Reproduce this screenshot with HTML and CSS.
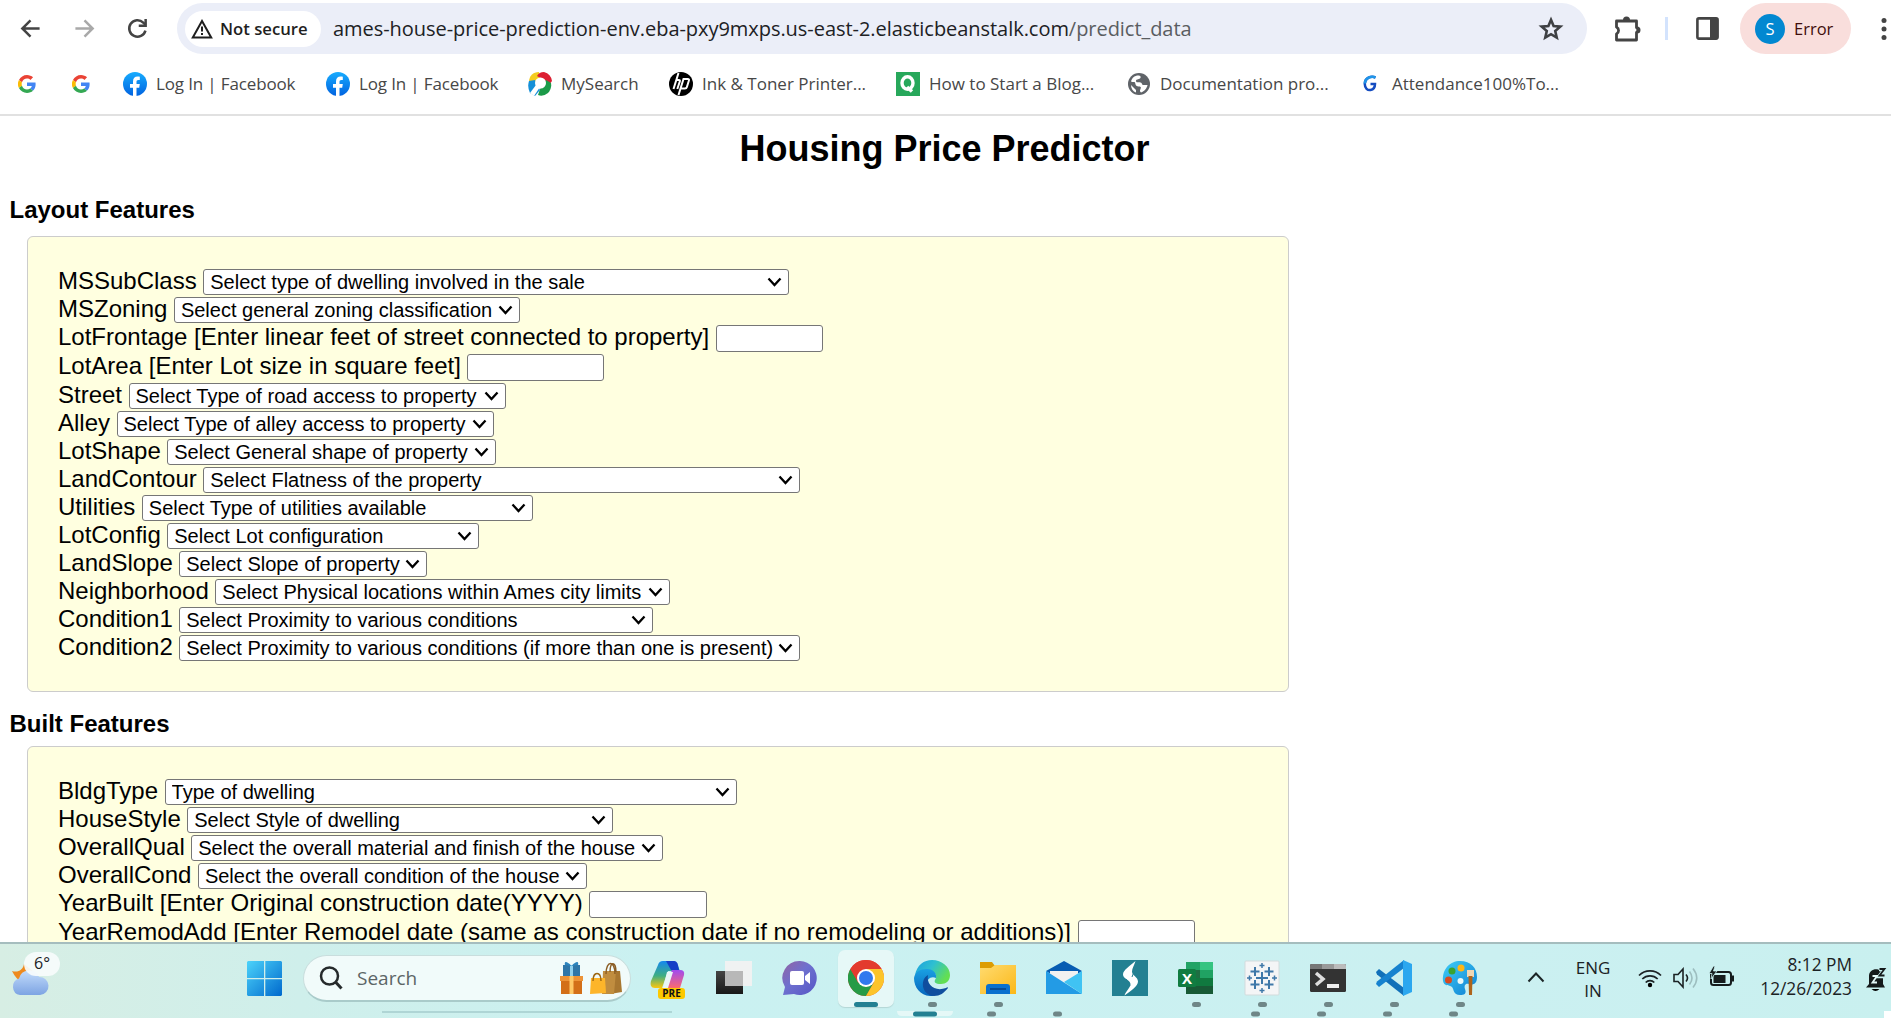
FILE: index.html
```html
<!DOCTYPE html>
<html lang="en">
<head>
<meta charset="utf-8">
<title>Housing Price Predictor</title>
<link rel="stylesheet" href="styles.css">
</head>
<body>
<svg width="0" height="0" class="defs" aria-hidden="true">
  <defs>
    <linearGradient id="fb" x1="0" y1="0" x2="0" y2="1"><stop offset="0" stop-color="#18acfe"/><stop offset="1" stop-color="#0163e0"/></linearGradient>
    <linearGradient id="win" x1="0" y1="0" x2="1" y2="1"><stop offset="0" stop-color="#4cd3fa"/><stop offset="1" stop-color="#0069cd"/></linearGradient>
    <linearGradient id="cloud" x1="0" y1="0" x2="0" y2="1"><stop offset="0" stop-color="#c3dcfb"/><stop offset="1" stop-color="#7da4e3"/></linearGradient>
    <linearGradient id="copA" x1="0" y1="0" x2="0" y2="1"><stop offset="0" stop-color="#1588ee"/><stop offset=".55" stop-color="#3fae82"/><stop offset="1" stop-color="#fdc70c"/></linearGradient>
    <linearGradient id="copB" x1="0" y1="0" x2="0" y2="1"><stop offset="0" stop-color="#a04bf0"/><stop offset="1" stop-color="#fb6a70"/></linearGradient>
    <linearGradient id="chat" x1="0" y1="0" x2="1" y2="1"><stop offset="0" stop-color="#9364a3"/><stop offset=".45" stop-color="#6e70cf"/><stop offset="1" stop-color="#5656c5"/></linearGradient>
    <linearGradient id="edgeA" x1="0" y1="0" x2="1" y2=".5"><stop offset="0" stop-color="#1a9fe0"/><stop offset=".5" stop-color="#2fc0d0"/><stop offset="1" stop-color="#63df52"/></linearGradient>
    <linearGradient id="edgeB" x1="0" y1="0" x2="0" y2="1"><stop offset="0" stop-color="#1aa0e2"/><stop offset="1" stop-color="#0766bd"/></linearGradient>
    <linearGradient id="fold" x1="0" y1="0" x2="1" y2="1"><stop offset="0" stop-color="#ffdb70"/><stop offset="1" stop-color="#fbb818"/></linearGradient>
    <linearGradient id="paint" x1="0" y1="0" x2="1" y2="1"><stop offset="0" stop-color="#3ecdf7"/><stop offset="1" stop-color="#0f7fd2"/></linearGradient>
    <linearGradient id="dark" x1="0" y1="0" x2="0" y2="1"><stop offset="0" stop-color="#454545"/><stop offset="1" stop-color="#181818"/></linearGradient>
  </defs>
  <symbol id="google" viewBox="0 0 48 48"><path fill="#ea4335" d="M24 9.500c3.500 0 6.700 1.200 9.200 3.600l6.900-6.900C35.900 2.400 30.500 0 24 0 14.600 0 6.500 5.400 2.600 13.200l8 6.200C12.400 13.700 17.700 9.500 24 9.500z"/><path fill="#4285f4" d="M47 24.600c0-1.600-.2-3.100-.4-4.600H24v9h12.900c-.6 3-2.300 5.500-4.800 7.200l7.700 6C44.400 38 47 31.800 47 24.600z"/><path fill="#fbbc05" d="M10.500 28.600a14.500 14.500 0 0 1 0-9.200l-8-6.200a24 24 0 0 0 0 21.600z"/><path fill="#34a853" d="M24 48c6.500 0 11.900-2.100 15.900-5.800l-7.700-6c-2.200 1.400-4.900 2.300-8.200 2.300-6.300 0-11.600-4.200-13.500-9.900l-8 6.200C6.500 42.600 14.600 48 24 48z"/></symbol>
  <symbol id="facebook" viewBox="0 0 24 24"><circle cx="12" cy="12" r="12" fill="url(#fb)"/><path fill="#fff" d="M10 24v-8.300H7V12h3v-2.600C10 6.300 11.800 4.600 14.500 4.600c1.300 0 2.300.2 2.300.2V8h-1.400c-1.500 0-1.900.9-1.900 1.800V12h3.300l-.6 3.700h-2.700V24z"/></symbol>
</svg>

<header class="browser">
  <div class="toolbar">
    <svg class="nav-icon" viewBox="0 0 24 24"><path d="M21.500 12H4M12 3.500 3.500 12l8.500 8.500"/></svg>
    <svg class="nav-icon disabled" viewBox="0 0 24 24"><path d="M2.500 12H20M12 3.500l8.500 8.500-8.500 8.500"/></svg>
    <svg class="nav-icon" viewBox="0 0 24 24"><path d="M20.300 14.200A8.600 8.600 0 1 1 18 5.800l2.500 2.500"/><path d="M20.500 2v7.200h-7.200"/></svg>
    <div class="address">
      <div class="security">
        <svg width="22" height="20" viewBox="0 0 22 20"><path d="M11 2 20.200 18.500H1.800z" fill="none" stroke="#1f1f1f" stroke-width="2"/><path d="M11 7.500v5M11 14v2" stroke="#1f1f1f" stroke-width="2"/></svg>
        <span>Not secure</span>
      </div>
      <div class="url">ames-house-price-prediction-env.eba-pxy9mxps.us-east-2.elasticbeanstalk.com<span>/predict_data</span></div>
      <svg class="star" width="26" height="26" viewBox="0 0 24 24"><path d="m12 3.500 2.400 5.800 6.200.5-4.700 4.100 1.400 6.100-5.300-3.200L6.700 20l1.400-6.100-4.700-4.100 6.200-.5z" fill="none" stroke="#3f4144" stroke-width="2.400"/></svg>
    </div>
    <svg class="puzzle" width="28" height="28" viewBox="0 0 28 28"><path d="M3.500 6h20v6.500a3 3 0 0 1 0 5V25h-20v-6a4 4 0 0 0 0-7z" fill="none" stroke="#444" stroke-width="2.800" stroke-linejoin="round"/><path d="M10 5a3.500 3.500 0 0 1 7 0zM24 11.500a3.500 3.500 0 0 1 0 7z" fill="#444"/></svg>
    <i class="divider"></i>
    <svg class="panel" width="23" height="23" viewBox="0 0 23 23"><rect x="1.400" y="1.400" width="20.200" height="20.200" rx="1.500" fill="none" stroke="#444" stroke-width="2.600"/><path d="M14 1h8v21h-8z" fill="#444"/></svg>
    <div class="profile"><b>S</b><span>Error</span></div>
    <svg class="more" width="8" height="24" viewBox="0 0 8 24"><circle cx="4" cy="3.500" r="2.500"/><circle cx="4" cy="12" r="2.500"/><circle cx="4" cy="20.500" r="2.500"/></svg>
  </div>
  <nav class="bookmarks">
    <a><svg width="18" height="18"><use href="#google"/></svg></a>
    <a><svg width="18" height="18"><use href="#google"/></svg></a>
    <a class="fb"><svg width="24" height="24"><use href="#facebook"/></svg><span>Log In | Facebook</span></a>
    <a class="fb"><svg width="24" height="24"><use href="#facebook"/></svg><span>Log In | Facebook</span></a>
    <a><svg width="24" height="24" viewBox="0 0 24 24"><path d="M1 10C1 4 5 0 11 0l1 6-5 8H1z" fill="#f4cc20"/><path d="M9 4q2-4 7-4 7 2 8 9l-3 4-7-6z" fill="#dc1f32"/><path d="M18 8l5 3q1 6-3 10-5 4-10 2l2-6z" fill="#1b9a48"/><path d="M1 9q-2 6 1 12l5 3 5-6-5-10z" fill="#148fd8"/><circle cx="12.500" cy="11" r="5.500" fill="#fff"/><path d="m8 13-6 8 4 3 6-9z" fill="#fff"/></svg><span>MySearch</span></a>
    <a><svg width="24" height="24" viewBox="0 0 24 24"><circle cx="12" cy="12" r="12"/><g fill="none" stroke="#fff" stroke-width="2"><path d="M9.500 1 4.500 17M6.500 8h3.300q1.500 0 1 1.500L8.300 17M17.500 7h-3L9.500 23M17.500 7h1.200q1.700 0 1.200 1.500l-2 6.500q-.4 1.500-2 1.500h-4"/></g></svg><span>Ink &amp; Toner Printer...</span></a>
    <a><svg width="24" height="24" viewBox="0 0 24 24"><path d="M0 0h24v24H0z" fill="#27a85b"/><ellipse cx="11.500" cy="11" rx="5.500" ry="6.300" fill="none" stroke="#fff" stroke-width="3.400"/><path d="m11 15 5 4.500" stroke="#fff" stroke-width="3.500"/></svg><span>How to Start a Blog...</span></a>
    <a><svg width="22" height="22" viewBox="0 0 22 22"><circle cx="11" cy="11" r="11" fill="#5f6368"/><path d="M3 8.500C4 4 8 2 11 2.500c2 .3 2 2 1 3-1.500 1-4 .5-4 2.500s3 1 4.500 1.500c2 .5 1 2.500 3 2.500h4c-.5 3-3 6.500-6.500 7.500-1-1-1.500-1.500-.5-3.500 1-2 0-2.500-2-2.500-3 0-3-3-3.500-4C6.500 8.500 5 9.500 3 8.500zM3 12l5 5v2.500c-3-1-5-4-5-7.500z" fill="#fff"/></svg><span>Documentation pro...</span></a>
    <a><svg width="14" height="17" viewBox="0 0 14 17"><path d="M12.500 2.500C8 .5 2 3 1.800 8.500c-.2 5 3 7 5.700 6.500 3-.5 4.500-3 4.500-6H7.500" fill="none" stroke="#144cc0" stroke-width="2.500"/><path d="M12.500 2.500C8 .5 2 3 1.800 8.500" fill="none" stroke="#1f95e8" stroke-width="2.500"/></svg><span>Attendance100%To...</span></a>
  </nav>
</header>

<main>
  <h1>Housing Price Predictor</h1>
  <h2>Layout Features</h2>
  <section class="pane layout-pane">
    <div class="row"><label>MSSubClass</label><select class="w586"><option>Select type of dwelling involved in the sale</option></select></div>
    <div class="row"><label>MSZoning</label><select class="w346"><option>Select general zoning classification</option></select></div>
    <div class="row number"><label>LotFrontage [Enter linear feet of street connected to property]</label><input class="w107"></div>
    <div class="row number"><label>LotArea [Enter Lot size in square feet]</label><input class="w136"></div>
    <div class="row"><label>Street</label><select class="w377"><option>Select Type of road access to property</option></select></div>
    <div class="row"><label>Alley</label><select class="w377"><option>Select Type of alley access to property</option></select></div>
    <div class="row"><label>LotShape</label><select class="w329"><option>Select General shape of property</option></select></div>
    <div class="row"><label>LandContour</label><select class="w597"><option>Select Flatness of the property</option></select></div>
    <div class="row"><label>Utilities</label><select class="w391"><option>Select Type of utilities available</option></select></div>
    <div class="row"><label>LotConfig</label><select class="w312"><option>Select Lot configuration</option></select></div>
    <div class="row"><label>LandSlope</label><select class="w248"><option>Select Slope of property</option></select></div>
    <div class="row"><label>Neighborhood</label><select class="w455"><option>Select Physical locations within Ames city limits</option></select></div>
    <div class="row"><label>Condition1</label><select class="w474"><option>Select Proximity to various conditions</option></select></div>
    <div class="row"><label>Condition2</label><select class="w621"><option>Select Proximity to various conditions (if more than one is present)</option></select></div>
  </section>
  <h2 class="built">Built Features</h2>
  <section class="pane">
    <div class="row"><label>BldgType</label><select class="w572"><option>Type of dwelling</option></select></div>
    <div class="row"><label>HouseStyle</label><select class="w426"><option>Select Style of dwelling</option></select></div>
    <div class="row"><label>OverallQual</label><select class="w472"><option>Select the overall material and finish of the house</option></select></div>
    <div class="row"><label>OverallCond</label><select class="w389"><option>Select the overall condition of the house</option></select></div>
    <div class="row number"><label>YearBuilt [Enter Original construction date(YYYY)</label><input class="w118"></div>
    <div class="row number"><label>YearRemodAdd [Enter Remodel date (same as construction date if no remodeling or additions)]</label><input class="w117"></div>
  </section>
</main>

<footer class="taskbar">
  <div class="weather">
    <svg width="38" height="36" viewBox="0 0 38 36"><path d="M1 11c6 2 11-1 12-7l10 8-12 10c-4-2-7-5-10-11z" fill="#ee8a1e"/><path d="M9 35a8.500 8.500 0 0 1-1-16.500A10.500 10.500 0 0 1 28 17a9 9 0 0 1 1 18z" fill="url(#cloud)"/></svg>
    <span>6°</span>
  </div>
  <svg class="start" width="35" height="35" viewBox="0 0 35 35"><path d="M1 0h16v17H0V1zM18.300 0H34l1 1v16H18.300zM0 18.300h17V35H1l-1-1zM18.300 18.300H35V34l-1 1H18.300z" fill="url(#win)"/></svg>
  <div class="search">
    <svg width="24" height="24" viewBox="0 0 24 24"><circle cx="10.500" cy="10" r="8.500" fill="none" stroke="#252a2b" stroke-width="2.500"/><path d="m16.500 16 6 6.500" stroke="#252a2b" stroke-width="3"/></svg>
    <span>Search</span>
    <svg class="gifts" width="62" height="34" viewBox="0 0 62 34"><path d="M3 4h17v11H3z" fill="#2f76a8"/><path d="M10 4h3v11h-3z" fill="#8fd0ee"/><path d="M11.500 5C6-1 4 1 5 4zM11.500 5C17-1 19 1 18 4z" fill="#2d84bd"/><path d="M1 18h21v15H1z" fill="#d36f18"/><path d="M0 15h23v5H0z" fill="#ed9337"/><path d="M9.500 15h4v18h-4z" fill="#ffc866"/><path d="M43 10h17l2 21-12 2-7-6z" fill="#a87730"/><path d="M43 10h13l-2 23H42z" fill="#c08d3f"/><path d="M46 13c0-14 9-14 9 0M50 11c0-12 6-10 6 0" fill="none" stroke="#8b5d24" stroke-width="1.400"/><path d="M31 17h14l1 15-16 1z" fill="#fdb52a"/><path d="M33 20c0-10 8-10 8 0" fill="none" stroke="#9c6510" stroke-width="1.400"/></svg>
  </div>
  <div class="apps">
    <div class="app"><svg width="36" height="40" viewBox="0 0 36 40"><path d="M8 5q1-4 5-4h10q3 0 5 5l2 5H18l-6 17H5c-4 0-5-3-4-7z" fill="url(#copA)"/><path d="M16 1h8q3 0 4 4l1 5h-8z" fill="#143fc6"/><path d="M22 10h8q5 0 4 5l-4 13H14z" fill="url(#copB)"/><path d="M17 12h6l-5 16h-5z" fill="#e9f6f6"/><rect x="8" y="28" width="27" height="11" rx="3" fill="#fdc900"/><text x="21.500" y="37.200" text-anchor="middle" class="pre">PRE</text></svg></div>
    <div class="app"><svg width="36" height="36" viewBox="0 0 36 36"><path d="M0 11h27v23H0z" fill="url(#dark)"/><path d="M9 1h27v25H9z" fill="#f0f2f2"/><path d="M9 11h18v15H9z" fill="#b8b8b8"/></svg></div>
    <div class="app"><svg width="36" height="36" viewBox="0 0 36 36"><path d="M18 1a17 17 0 1 1-6 33L1 35l2-8A17 17 0 0 1 18 1z" fill="url(#chat)"/><rect x="8" y="11" width="14" height="14" rx="2" fill="#fff"/><path d="m23 16 5-4v12l-5-4z" fill="#fff"/></svg></div>
    <div class="app active running"><svg width="36" height="36" viewBox="0 0 36 36"><circle cx="18" cy="18" r="18" fill="#ea4335"/><path d="M2.400 9A18 18 0 0 0 18 36l7.800-13.500L18 27 10.200 22.500z" fill="#269b46"/><path d="M33.600 9H18l7.800 13.500L18 36A18 18 0 0 0 33.600 9z" fill="#fcc42b"/><path d="M2.400 9 10.200 22.500 18 9h15.600A18 18 0 0 0 2.400 9z" fill="#e33b2e"/><circle cx="18" cy="18" r="9" fill="#fff"/><circle cx="18" cy="18" r="7" fill="#3179ee"/></svg></div>
    <div class="app running"><svg width="36" height="36" viewBox="0 0 36 36"><path d="M1 15C3 5 10 0 18 0c10 0 18 7 18 15 0 6-4 9-9 9-6 0-7-2-6-4 3-4 0-9-6-9-6 0-11 2-14 4z" fill="url(#edgeA)"/><path d="M0 18C1 12 6 9 13 9c6 0 10 4 9 9-8-4-16 9-2 18C8 37 0 29 0 18z" fill="url(#edgeB)"/><path d="M14 15c-8 4-7 20 6 21 6 0 10-3 14-8 0-1-1-1-2 0-11 4-20-3-18-13z" fill="#104e9e"/></svg></div>
    <div class="app running"><svg width="36" height="36" viewBox="0 0 36 36"><path d="M0 2h12l3 4-4 5H0z" fill="#dc9c04"/><path d="M0 8h11l4-3h21v29H0z" fill="url(#fold)"/><path d="M6 34V27q0-3 3-3h18q3 0 3 3v7z" fill="#0a70ce"/><path d="M10 29h16" stroke="#064c98" stroke-width="2"/></svg></div>
    <div class="app"><svg width="36" height="36" viewBox="0 0 36 36"><path d="m0 11 18-10 18 10-18 12z" fill="#075cb2"/><path d="M4 11h28v3L18 24 4 14z" fill="#f1f1f1"/><path d="M0 11 36 34H0z" fill="#239be5"/><path d="M36 11v23L18 22z" fill="#40c3f3"/></svg></div>
    <div class="app"><svg width="36" height="36" viewBox="0 0 36 36"><path d="M0 0h36v36H0z" fill="#238092"/><path d="M23.500 1C18 6 11 10 11 14.500c0 4.500 7 5 7.500 9.500.3 3-4.500 7-6 11.500C19 31 26 26 26 21.500c0-4.500-6-6-6-10C20 8 22.500 5 23.500 1z" fill="#fff"/><path d="M23 9l-3 8M14 19l4 7" stroke="#238092" stroke-width="1"/></svg></div>
    <div class="app running"><svg width="36" height="36" viewBox="0 0 36 36"><path d="M8 2h27v32H8z" fill="#1e6e42"/><path d="M8 2h14v8H8z" fill="#21a365"/><path d="M22 2h13v8H22z" fill="#35c481"/><path d="M22 10h13v8H22z" fill="#20a263"/><path d="M8 18h27v8H8z" fill="#10793f"/><path d="M8 26h27v8H8z" fill="#185a36"/><rect y="9" width="18" height="18" rx="1.500" fill="#107c41"/><text x="9" y="23.500" text-anchor="middle" class="xl">X</text></svg></div>
    <div class="app running"><svg width="36" height="36" viewBox="0 0 36 36"><rect x="1" y="1" width="34" height="34" rx="1" fill="#f4f5f6" stroke="#d2dbdc"/><g stroke="#3f78a8" stroke-width="2"><path d="M18 12v12M12 18h12M11 7v9M6.500 11.500h9M25 7v9M20.500 11.500h9M11 20v9M6.500 24.500h9M25 20v9M20.500 24.500h9"/><path stroke-width="1.500" d="M18 3v5M15.500 5.500h5M18 28v5M15.500 30.500h5M5.500 15.500v5M3 18h5M30.500 15.500v5M28 18h5"/></g></svg></div>
    <div class="app running"><svg width="36" height="36" viewBox="0 0 36 36"><rect y="4" width="36" height="28" rx="1.500" fill="#333"/><path d="M0 5.500Q0 4 1.500 4H12v5H0z" fill="#777"/><path d="M12 4h12v5H12z" fill="#999"/><path d="M24 4h10.500Q36 4 36 5.500V9H24z" fill="#bbb"/><path d="m6 13 7 6-7 6" fill="none" stroke="#ddd" stroke-width="3.500"/><path d="M17 24h12v4H17z" fill="#eee"/></svg></div>
    <div class="app running"><svg width="36" height="36" viewBox="0 0 36 36"><path d="m0 12 3-3 25 19v8L1 14.500z" fill="#1170b9"/><path d="m0 24 3 3L28 8V0L1 21.500z" fill="#1682cf"/><path d="m27 0 9 4v28l-9 4z" fill="#2ba7ef"/></svg></div>
    <div class="app running"><svg width="36" height="36" viewBox="0 0 36 36"><path d="M18 1c11 0 17 7 17 16 0 8-5 8-8 7-4-1-5 2-4 5 2 5-1 6-5 6-7 0-6-6-8-8-3-3-8 0-9-6C0 9 8 1 18 1z" fill="url(#paint)"/><circle cx="10" cy="11" r="3.500" fill="#3aa330"/><circle cx="19" cy="8" r="3.500" fill="#ffb615"/><circle cx="6.500" cy="20" r="3.500" fill="#d84a20"/><circle cx="18.500" cy="21" r="3" fill="#eafafa"/><path d="M25 10h7v7h-7z" fill="#eed7b5"/><path d="M26.500 16h4l-.5 19h-3z" fill="#ae641c"/></svg></div>
  </div>
  <svg class="chevron" width="18" height="12" viewBox="0 0 18 12"><path d="m1.500 10.500 7.500-8 7.500 8" fill="none" stroke="#1c2526" stroke-width="2"/></svg>
  <div class="lang">ENG<br>IN</div>
  <svg class="wifi" width="24" height="20" viewBox="0 0 24 20"><g fill="none" stroke="#1b2224" stroke-width="1.700"><path d="M1 7.500a15.500 15.500 0 0 1 22 0M4.300 11a11 11 0 0 1 15.400 0M7.700 14.500a6 6 0 0 1 8.600 0"/></g><circle cx="12" cy="17" r="2.200"/></svg>
  <svg class="volume" width="26" height="22" viewBox="0 0 26 22"><g fill="none" stroke="#1b2224" stroke-width="1.600"><path d="M1 7.500h4L10 2v18l-5-5.500H1zM13 7.500q3 3.500 0 7"/><path d="M16.500 4.500q5 6.500 0 13M20 1.500q7.500 9.500 0 19" stroke="#9dbebf"/></g></svg>
  <svg class="battery" width="26" height="22" viewBox="0 0 26 22"><rect x="2" y="6" width="20" height="13" rx="2.500" fill="none" stroke="#161c1d" stroke-width="2"/><path d="M4.500 9h12v8h-12zM23 9.500h2v6h-2z" fill="#161c1d"/><path d="M4.500 0 0 7.500h3L2 13l6-8H4.500L6 0z" fill="#161c1d" stroke="#c9f0f0" stroke-width=".8"/></svg>
  <div class="clock">8:12 PM<br>12/26/2023</div>
  <svg class="bell" width="22" height="26" viewBox="0 0 22 26"><path d="M3 18V10c0-9 14-9 14 0v8l2 3.500H0z" fill="#151a1b"/><path d="M5.500 23h8q-4 4-8 0z"/><path d="M13 3h6l-5 7h6" fill="none" stroke="#c9f0f0" stroke-width="4.500"/><path d="M6.500 10h4.500l-4.500 6.500H11" fill="none" stroke="#e4f7f7" stroke-width="1.800"/><path d="M13.500 3h5l-5 6.500h5" fill="none" stroke="#151a1b" stroke-width="1.800"/></svg>
  <svg class="residue" width="1891" height="10" viewBox="0 0 1891 10"><path d="M382 4h290" stroke="#a5cdcc" stroke-width="1.500"/><path d="M897 3h56q0 5-5 5h-46q-5 0-5-5z" fill="#e5f8f7"/><path d="M1884 3h7v7h-7z" fill="#fff"/><rect x="913" y="3.500" width="24" height="5" rx="2.500" fill="#238092"/><g fill="#6f8687"><rect x="987" y="3.500" width="9" height="5" rx="2.500"/><rect x="1053" y="3.500" width="9" height="5" rx="2.500"/><rect x="1251" y="3.500" width="9" height="5" rx="2.500"/><rect x="1317" y="3.500" width="9" height="5" rx="2.500"/><rect x="1383" y="3.500" width="9" height="5" rx="2.500"/><rect x="1449" y="3.500" width="9" height="5" rx="2.500"/></g></svg>
</footer>
</body>
</html>
```
FILE: styles.css
```css
* { box-sizing: border-box; }
body {
  margin: 0;
  height: 1018px;
  display: flex;
  flex-direction: column;
  overflow: hidden;
  background: #fff;
  color: #000;
  font-family: "Liberation Sans", Arial, sans-serif;
}
svg { display: block; flex: none; }
.defs { position: absolute; }

/* Browser chrome */
.browser {
  height: 116px;
  flex: none;
  border-bottom: 2px solid #e1e1e1;
  font-family: "Open Sans", "Noto Sans", sans-serif;
}
.toolbar { display: flex; align-items: center; height: 57px; padding-left: 19px; }
.nav-icon { width: 23px; height: 23px; margin-right: 31px; fill: none; stroke: #444; stroke-width: 2.6; }
.disabled { margin-right: 30px; stroke: #a9a9a9; }
.address {
  display: flex;
  align-items: center;
  width: 1410px;
  height: 51px;
  margin-left: -3px;
  padding-left: 8px;
  border-radius: 26px;
  background: #ebeef8;
}
.security {
  display: flex;
  align-items: center;
  gap: 7px;
  flex: none;
  width: 136px;
  height: 36px;
  padding-left: 6px;
  border-radius: 18px;
  background: #fff;
  color: #1f1f1f;
  font-size: 16.7px;
  font-weight: 600;
  white-space: nowrap;
}
.url { flex: none; width: 1217px; padding-left: 12px; color: #202124; font-size: 20px; letter-spacing: -.045px; white-space: nowrap; }
.url span { color: #5a5d61; }
.puzzle { margin-left: 26px; }
.divider { width: 3px; height: 23px; margin: 0 28px 0 24px; background: #d3e3fd; }
.profile {
  display: flex;
  align-items: center;
  gap: 9px;
  width: 111px;
  height: 51px;
  margin-left: 21px;
  padding-left: 15px;
  border-radius: 26px;
  background: #f9dedc;
  color: #410e0b;
  font-size: 16.5px;
}
.profile b {
  width: 30px;
  height: 30px;
  border-radius: 50%;
  background: #0288d1;
  color: #fff;
  font-weight: 400;
  line-height: 30px;
  text-align: center;
}
.more { margin-left: 29px; fill: #444; }
.bookmarks {
  display: grid;
  grid-template-columns: 54px 51px 203px 202px 141px 227px 232px 235px 200px;
  align-items: center;
  height: 53px;
  padding-left: 18px;
}
.bookmarks a { display: flex; align-items: center; gap: 9px; color: #474747; font-size: 17px; white-space: nowrap; }
.bookmarks a:nth-child(8) { gap: 10px; }
.bookmarks a:last-child { gap: 15px; }
.fb span { letter-spacing: -.14px; }

/* Page */
main { flex: 1; min-height: 0; overflow: hidden; }
h1 { margin: 12px 2px 0 0; font-size: 36px; line-height: 42px; text-align: center; }
h2 { margin: 26px 0 0 9.5px; font-size: 24px; line-height: 28px; }
.pane {
  width: 1262px;
  margin: 12px 0 0 27px;
  padding: 32px 30px 29px;
  border: 1px solid #ccc;
  border-radius: 6px;
  background: #ffffe0;
}
.layout-pane { height: 456px; }
h2.built { margin-top: 18px; }
.built + .pane { margin-top: 8px; }
.row { display: flex; align-items: flex-start; gap: 6.5px; height: 28px; }
.row.number { height: 29px; }
label { font-size: 24px; line-height: 24px; white-space: nowrap; }
select, input {
  flex: none;
  margin: 0;
  border: 1px solid #767676;
  border-radius: 3px;
  background: #fff;
  color: #000;
  font: 20px "Liberation Sans", Arial, sans-serif;
}
select {
  height: 26px;
  padding: 0 6px;
  appearance: none;
  background: #fff url("data:image/svg+xml,%3Csvg xmlns='http://www.w3.org/2000/svg' width='15' height='10'%3E%3Cpath d='M1.500 1.500l6 6.500 6-6.500' fill='none' stroke='black' stroke-width='2.300'/%3E%3C/svg%3E") no-repeat right 6px center;
}
input { height: 27px; }
.w586 { width: 586px; }
.w346 { width: 346.5px; }
.w107 { width: 107px; }
.w136 { width: 136.5px; }
.w377 { width: 377px; }
.w329 { width: 329px; }
.w597 { width: 597px; }
.w391 { width: 391.5px; }
.w312 { width: 312px; }
.w248 { width: 248px; }
.w455 { width: 455px; }
.w474 { width: 474px; }
.w621 { width: 621px; }
.w572 { width: 572px; }
.w426 { width: 426px; }
.w472 { width: 471.5px; }
.w389 { width: 389.5px; }
.w118 { width: 118px; }
.w117 { width: 117px; }

/* Taskbar */
.taskbar {
  position: relative;
  display: flex;
  align-items: flex-start;
  flex: none;
  height: 76px;
  border-top: 2px solid #a5bdbe;
  background: linear-gradient(90deg, #d7eee4 0, #cfefeb 300px, #caf1f1 650px, #cbf0f1 1500px, #c9f0ef 100%);
  color: #1b2224;
  font-family: "Open Sans", "Noto Sans", sans-serif;
}
.weather { position: relative; width: 247px; padding: 16px 0 0 11px; }
.weather span {
  position: absolute;
  left: 24px;
  top: 8px;
  width: 36px;
  height: 24px;
  border-radius: 12px;
  background: rgba(247, 252, 252, .92);
  font-size: 16px;
  line-height: 23px;
  text-align: center;
}
.start { margin-top: 17px; }
.search {
  display: flex;
  align-items: center;
  flex: none;
  width: 328px;
  height: 47px;
  margin: 11px 0 0 21px;
  padding-left: 15px;
  border: 1px solid #c9dedd;
  border-bottom: 2px solid #a9cbca;
  border-radius: 24px;
  background: #f1fbfa;
  color: #5c6566;
  font-size: 19px;
}
.search span { width: 217px; padding-left: 14px; }
.apps { display: flex; gap: 10px; margin-left: 9px; }
.app {
  display: flex;
  flex-direction: column;
  align-items: center;
  width: 56px;
  height: 57px;
  margin-top: 6px;
  padding-top: 10px;
}
.app.active { border-radius: 7px; background: #e6f8f7; box-shadow: 0 1px 1px #b4d6d5; }
.running::after { content: ""; width: 9px; height: 5px; margin-top: 6px; border-radius: 3px; background: #6f8687; }
.active::after { width: 24px; background: #238092; }
.pre { font: 700 10px "Open Sans", sans-serif; fill: #111; }
.xl { font: 700 15px "Open Sans", sans-serif; fill: #fff; }
.chevron { margin: 27px 0 0 39px; }
.lang { width: 62px; margin: 12px 0 0 17px; font-size: 17px; line-height: 23px; text-align: center; }
.wifi { margin: 24px 0 0 14px; }
.volume { margin: 23px 0 0 11px; }
.battery { margin: 22px 0 0 10px; }
.clock { width: 117px; margin-top: 9px; font-size: 17.3px; line-height: 24px; text-align: right; }
.bell { margin: 22px 0 0 14px; }
.residue { position: absolute; left: 0; bottom: 0; }
```
